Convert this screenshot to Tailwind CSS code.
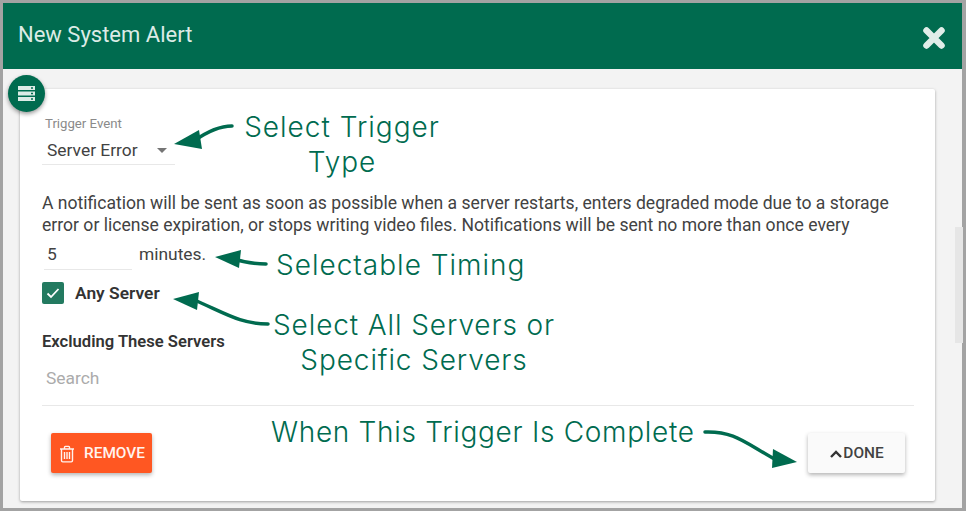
<!DOCTYPE html>
<html lang="en">
  <head>
    <meta charset="UTF-8" />
    <script src="https://cdn.jsdelivr.net/npm/@tailwindcss/browser@4"></script>
    <title>New System Alert</title>
  </head>
  <body class="m-0 overflow-hidden bg-[#a3a3a3] font-['Roboto',sans-serif]">
    <div class="relative h-[511px] w-[966px] pt-[3px] pr-[4px] pb-[3px] pl-[3px]">
      <div class="flex h-full flex-col bg-[#f3f3f3]">
        <!-- Header -->
        <header class="flex h-[66px] shrink-0 items-center justify-between bg-[#006b4f] pr-[16px] pl-[15px]">
          <h1 class="mb-[4px] text-[22px] font-normal text-[#dcebe6]">New System Alert</h1>
          <svg class="mt-[4px] h-[24px] w-[24px]" viewBox="0 0 24 24" fill="none" stroke="#e0eee9" stroke-width="6.5" stroke-linecap="round">
            <path d="M4.5 4.5 19.5 19.5M19.5 4.5 4.5 19.5" />
          </svg>
        </header>

        <!-- Card -->
        <div class="flex flex-1 pt-[20px] pr-[27px] pb-[7px] pl-[17px]">
          <main class="flex flex-1 flex-col rounded-[2px] bg-white pt-[28px] pr-[21px] pl-[22px] shadow-[0_1px_3px_rgba(0,0,0,0.35)]">
            <div class="w-[133px] border-b border-[#e8e8e8] pl-[3px]">
              <div class="text-[13.2px] leading-[14px] text-[#8a8a8a]">Trigger Event</div>
              <div class="flex h-[33px] items-center justify-between pt-[5px] pr-[8px] text-[17.4px] text-[#424242]">
                <span class="ml-[2px]">Server Error</span>
                <span class="h-0 w-0 border-t-[5px] border-r-[5px] border-l-[5px] border-t-[#757575] border-r-transparent border-l-transparent"></span>
              </div>
            </div>

            <p class="mt-[27px] text-[17.57px] leading-[22px] text-[#424242]">A notification will be sent as soon as possible when a server restarts, enters degraded mode due to a storage error or license expiration, or stops writing video files. Notifications will be sent no more than once every</p>

            <div class="flex items-center pt-[1px]">
              <div class="ml-[2px] flex h-[33px] w-[88px] items-center border-b border-[#e8e8e8] pt-[3px] pl-[3px] text-[17.4px] text-[#424242]">5</div>
              <span class="ml-[7px] text-[17.4px] leading-[22px] text-[#424242]">minutes.</span>
            </div>

            <div class="mt-[11px] flex items-center">
              <span class="flex h-[22px] w-[22px] items-center justify-center rounded-[2px] bg-[#237a60]">
                <svg class="h-[16px] w-[16px]" viewBox="0 0 16 16" fill="none" stroke="#fff" stroke-width="1.8"><path d="M2.5 8.5 6 12l7.5-8" /></svg>
              </span>
              <span class="mt-[1px] ml-[11px] text-[17.4px] leading-[22px] font-semibold text-[#333]">Any Server</span>
            </div>

            <div class="mt-[29px] text-[16.6px] leading-[18px] font-semibold text-[#333]">Excluding These Servers</div>
            <div class="mt-[17px] pl-[4px] text-[17.4px] leading-[20px] text-[#ababab]">Search</div>

            <div class="mt-[17px] flex items-start justify-between border-t border-[#e8e8e8] pt-[27px] pr-[9px] pl-[9px]">
              <button class="flex h-[40px] w-[101px] items-center rounded-[2px] bg-[#ff5722] pt-[1px] pl-[6px] text-[15.4px] font-medium text-[#fff3ee] shadow-[0_2px_4px_rgba(0,0,0,0.3)]">
                <svg class="mr-[7px] h-[20px] w-[20px]" viewBox="0 0 20 20" fill="none" stroke="#fff3ee" stroke-width="1.4">
                  <path d="M3 5h14M7.5 5V3.2c0-.5.3-.8.8-.8h3.4c.5 0 .8.3.8.8V5M4.5 5v11.6c0 .8.5 1.3 1.3 1.3h8.4c.8 0 1.3-.5 1.3-1.3V5M7.5 8v7M10 8v7M12.5 8v7" />
                </svg>
                REMOVE
              </button>
              <button class="flex h-[40px] w-[97px] items-center justify-center rounded-[2px] bg-[#fafafa] pt-[1px] text-[15.4px] font-medium text-[#424242] shadow-[0_2px_4px_rgba(0,0,0,0.3)]">
                <svg class="h-[14px] w-[14px]" viewBox="0 0 14 14" fill="none" stroke="#333" stroke-width="2.4"><path d="M2 10l5-5 5 5" /></svg>
                DONE
              </button>
            </div>
          </main>
        </div>
      </div>

      <!-- Scrollbar thumb -->
      <div class="absolute top-[227px] left-[955px] h-[116px] w-[8px] bg-[#e6e6e6]"></div>

      <!-- Server badge -->
      <div class="absolute top-[75px] left-[8px] flex h-[37px] w-[37px] items-center justify-center rounded-full bg-[#006b4f] shadow-[0_2px_4px_rgba(0,0,0,0.4)]">
        <svg class="h-[19px] w-[19px]" viewBox="0 0 19 19" fill="#dcebe6">
          <path d="M1 2h17v4H1zM1 7.5h17v4H1zM1 13h17v4H1z" />
          <path fill="#006b4f" d="M14 3.3h2v1.4h-2zM14 8.8h2v1.4h-2zM14 14.3h2v1.4h-2z" />
        </svg>
      </div>

      <!-- Annotation arrows -->
      <svg class="absolute top-0 left-0 h-[511px] w-[966px]" viewBox="0 0 966 511" fill="none">
        <g stroke="#006b4f" stroke-width="3.5" stroke-linecap="round">
          <path d="M232 126C219 126 208 131 194 141" />
          <path d="M266 264C253 264 243 262 230 258" />
          <path d="M268 324C240 324 225 313 192 299" />
          <path d="M705 432C735 431 745 443 778 461" />
        </g>
        <g fill="#006b4f">
          <path d="M174 144 199 130 202 149Z" />
          <path d="M215 257 241 250 239 268Z" />
          <path d="M173 299 199 292 197 310Z" />
          <path d="M797 462 773 449 772 468Z" />
        </g>
      </svg>

      <!-- Annotation labels -->
      <div class="absolute top-[110px] left-[226px] w-[232px] text-center font-['Inter',sans-serif] text-[28px] leading-[35px] font-light tracking-[1px] text-[#006b4f]">Select Trigger<br />Type</div>
      <div class="absolute top-[247px] left-[276px] font-['Inter',sans-serif] text-[28px] leading-[36px] font-light tracking-[1px] text-[#006b4f]">Selectable Timing</div>
      <div class="absolute top-[308px] left-[255px] w-[318px] text-center font-['Inter',sans-serif] text-[28px] leading-[35px] font-light tracking-[0.9px] text-[#006b4f]">Select All Servers or<br />Specific Servers</div>
      <div class="absolute top-[414px] left-[271px] font-['Inter',sans-serif] text-[28px] leading-[36px] font-light tracking-[0.7px] text-[#006b4f]">When This Trigger Is Complete</div>
    </div>
  </body>
</html>
